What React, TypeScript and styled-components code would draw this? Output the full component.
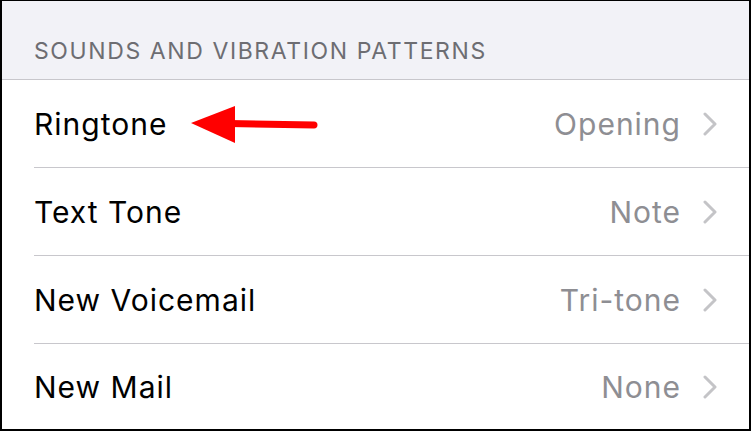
import React from "react";
import styled, { createGlobalStyle } from "styled-components";

const Global = createGlobalStyle`
  html, body { margin: 0; padding: 0; background: #ffffff; }
  body { font-family: Inter, "Liberation Sans", Arial, sans-serif; }
`;

const Frame = styled.div`
  box-sizing: border-box;
  width: 751px;
  height: 431px;
  border-top: 1px solid #000;
  border-left: 2px solid #000;
  border-right: 2px solid #000;
  border-bottom: 2px solid #000;
  background: #fff;
  display: flex;
  flex-direction: column;
  overflow: hidden;
`;

const Header = styled.div`
  box-sizing: border-box;
  height: 79px;
  flex: none;
  background: #f2f2f7;
  border-bottom: 1px solid #c8c7cc;
  display: flex;
  align-items: flex-end;
  padding: 0 0 15px 32px;
`;

const HeaderText = styled.span`
  font-size: 23px;
  line-height: 26px;
  color: #6d6d72;
  letter-spacing: 1.6px;
`;

const List = styled.div`
  display: flex;
  flex-direction: column;
  padding-left: 32px;
`;

const Row = styled.div<{ $last?: boolean }>`
  position: relative;
  box-sizing: border-box;
  height: ${(p) => (p.$last ? "86px" : "88px")};
  display: flex;
  align-items: center;
  padding-right: 32px;
  border-bottom: ${(p) => (p.$last ? "none" : "1px solid #c8c7cc")};
`;

const Label = styled.span`
  flex: 1;
  font-size: 30px;
  line-height: 34px;
  color: #000;
  letter-spacing: 1px;
`;

const Value = styled.span`
  font-size: 30px;
  line-height: 34px;
  color: #8e8e93;
  letter-spacing: 1px;
  margin-right: 22px;
`;

const Chevron = styled.svg`
  width: 14px;
  height: 24px;
  flex: none;
`;

const Arrow = styled.svg`
  position: absolute;
  left: 155px;
  top: 24px;
  width: 130px;
  height: 40px;
`;

const rows = [
  { label: "Ringtone", value: "Opening" },
  { label: "Text Tone", value: "Note" },
  { label: "New Voicemail", value: "Tri-tone" },
  { label: "New Mail", value: "None" },
];

export default function App() {
  return (
    <>
      <Global />
      <Frame>
        <Header>
          <HeaderText>SOUNDS AND VIBRATION PATTERNS</HeaderText>
        </Header>
        <List>
          {rows.map((r, i) => (
            <Row key={r.label} $last={i === rows.length - 1}>
              <Label>{r.label}</Label>
              <Value>{r.value}</Value>
              <Chevron viewBox="0 0 14 24">
                <path
                  d="M2 2 L12 12 L2 22"
                  fill="none"
                  stroke="#c4c4c7"
                  strokeWidth="3"
                  strokeLinecap="round"
                  strokeLinejoin="round"
                />
              </Chevron>
              {i === 0 && (
                <Arrow viewBox="0 0 130 40">
                  <line
                    x1="40"
                    y1="19.5"
                    x2="125"
                    y2="21"
                    stroke="#ff0000"
                    strokeWidth="7"
                    strokeLinecap="round"
                  />
                  <polygon points="2,19 46,2 46,39" fill="#ff0000" />
                </Arrow>
              )}
            </Row>
          ))}
        </List>
      </Frame>
    </>
  );
}
